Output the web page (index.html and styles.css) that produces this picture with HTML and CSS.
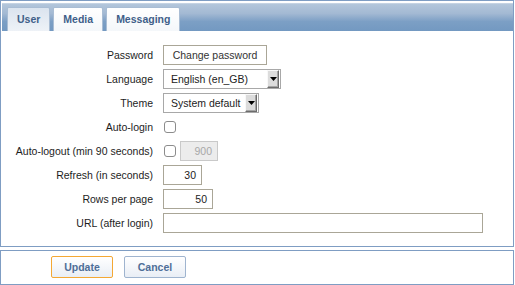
FILE: index.html
```html
<!DOCTYPE html>
<html>
<head>
<meta charset="utf-8">
<link rel="stylesheet" href="styles.css">
</head>
<body>
<div class="panel">
  <div class="tabbar">
    <div class="tab active">User</div>
    <div class="tab">Media</div>
    <div class="tab">Messaging</div>
  </div>
  <div class="form">
    <div class="lbl">Password</div>
    <div class="ctl"><span class="plainbtn">Change password</span></div>

    <div class="lbl">Language</div>
    <div class="ctl"><span class="select lang"><span class="val">English (en_GB)</span><span class="arrow"><svg width="7" height="4" viewBox="0 0 7 4"><path d="M0 0h7L3.5 4z" fill="#000"/></svg></span></span></div>

    <div class="lbl">Theme</div>
    <div class="ctl"><span class="select theme"><span class="val">System default</span><span class="arrow"><svg width="7" height="4" viewBox="0 0 7 4"><path d="M0 0h7L3.5 4z" fill="#000"/></svg></span></span></div>

    <div class="lbl">Auto-login</div>
    <div class="ctl"><span class="cb"></span></div>

    <div class="lbl">Auto-logout (min 90 seconds)</div>
    <div class="ctl"><span class="cb"></span><span class="input disabled w38">900</span></div>

    <div class="lbl">Refresh (in seconds)</div>
    <div class="ctl"><span class="input w39">30</span></div>

    <div class="lbl">Rows per page</div>
    <div class="ctl"><span class="input w50">50</span></div>

    <div class="lbl">URL (after login)</div>
    <div class="ctl"><span class="input w320"></span></div>
  </div>
</div>
<div class="footer">
  <span class="btn update">Update</span>
  <span class="btn">Cancel</span>
</div>
</body>
</html>
```
FILE: styles.css
```css
html, body {
  margin: 0;
  padding: 0;
  background: #fff;
}
body {
  font-family: "Liberation Sans", Arial, sans-serif;
  font-size: 10.5px;
  color: #1d1d1d;
  width: 515px;
  height: 285px;
  overflow: hidden;
}
.panel {
  box-sizing: border-box;
  width: 514px;
  height: 247px;
  border: 1px solid #7f9dc3;
  padding: 2px 0 0 1px;
}
.tabbar {
  height: 28px;
  box-sizing: border-box;
  background: linear-gradient(#b3c6db 0%, #a3b9d3 35%, #7c9fc5 65%, #7399c1 100%);
  border-top: 1px solid #c5d3e3;
  display: flex;
  align-items: flex-end;
  gap: 3px;
  padding-left: 5px;
}
.tab {
  box-sizing: border-box;
  height: 24px;
  line-height: 23px;
  padding: 0 9px;
  border: 1px solid #a9bdd4;
  border-bottom: none;
  border-radius: 2px 2px 0 0;
  background: linear-gradient(#ffffff, #f4f7fa);
  color: #3f5f89;
  font-weight: bold;
}
.tab.active {
  background: linear-gradient(#dbe4ef, #eef2f7);
}
.form {
  display: grid;
  grid-template-columns: 151px auto;
  grid-template-rows: 21px;
  grid-auto-rows: 20px;
  column-gap: 10px;
  row-gap: 4px;
  padding-top: 13px;
}
.lbl {
  text-align: right;
  align-self: center;
  white-space: nowrap;
}
.ctl {
  display: flex;
  align-items: center;
  gap: 4px;
}
.plainbtn {
  box-sizing: border-box;
  height: 20px;
  line-height: 18px;
  width: 104px;
  text-align: center;
  border: 1px solid #aaa697;
  color: #333;
  background: #fff;
}
.select {
  box-sizing: border-box;
  display: flex;
  align-items: center;
  height: 20px;
  border: 1px solid #a8a8a8;
  background: #fff;
  padding: 1px 1px 1px 7px;
}
.select.lang { width: 118px; }
.select.theme { width: 96px; }
.select .val { flex: 1; color: #222; }
.select .arrow {
  box-sizing: border-box;
  width: 12px;
  height: 18px;
  border: 1px solid;
  border-color: #f8f8f8 #6c6c6c #6c6c6c #f8f8f8;
  box-shadow: inset -1px -1px 0 #a5a5a5;
  background: #dcdcdc;
  display: flex;
  align-items: center;
  justify-content: center;
}
.select .arrow svg { display: block; }
.cb {
  box-sizing: border-box;
  width: 12px;
  height: 12px;
  margin-left: 1px;
  border: 1px solid #8c8c8c;
  border-radius: 3px;
  background: #fff;
}
.input {
  box-sizing: border-box;
  height: 20px;
  line-height: 18px;
  border: 1px solid #aaa697;
  background: #fff;
  text-align: right;
  padding-right: 5px;
  color: #1d1d1d;
}
.input.disabled {
  background: #ececec;
  border-color: #c9c9c9;
  color: #a8a8a8;
}
.w38 { width: 38px; }
.w39 { width: 39px; }
.w50 { width: 50px; }
.w320 { width: 320px; }
.footer {
  box-sizing: border-box;
  width: 514px;
  height: 35px;
  margin-top: 3px;
  border: 1px solid #7f9dc3;
  padding: 5px 0 0 50px;
  display: flex;
  align-items: flex-start;
  gap: 11px;
}
.btn {
  box-sizing: border-box;
  width: 62px;
  height: 22px;
  line-height: 20px;
  text-align: center;
  border: 1px solid #9fb4cf;
  border-radius: 2px;
  background: linear-gradient(#ffffff, #e9eef5);
  color: #4e6e98;
  font-weight: bold;
}
.btn.update {
  border-color: #f4a834;
}
```
